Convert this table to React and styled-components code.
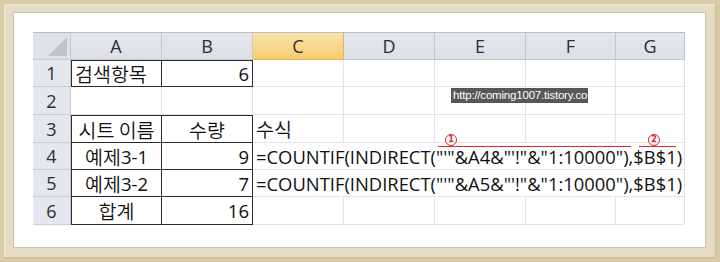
import React from "react";
import styled, { createGlobalStyle } from "styled-components";

const Global = createGlobalStyle`
  html, body { margin: 0; padding: 0; background: #fff; }
  body { font-family: "Noto Sans", "Noto Sans CJK KR", sans-serif; }
`;

const Frame = styled.div`
  width: 720px;
  height: 262px;
  box-sizing: border-box;
  background: #d6cba6;
  padding: 4px;
`;

const Bevel = styled.div`
  height: 100%;
  box-sizing: border-box;
  background: #e4dcc3;
  border-top: 1px solid #ece6d2;
  border-left: 1px solid #ece6d2;
  border-right: 1px solid #c9bd96;
  border-bottom: 1px solid #c9bd96;
  padding: 7px 9px 9px 8px;
`;

const Paper = styled.div`
  position: relative;
  height: 100%;
  box-sizing: border-box;
  background: #fff;
  border: 1px solid #cfc5a5;
  padding: 19px 0 0 19px;
`;

const Sheet = styled.div`
  display: grid;
  grid-template-columns: 38px 91px 91px 91px 91px 91px 90px 69px;
  grid-template-rows: 28px 27px 28px 28px 27px 27px 28px;
  width: 652px;
`;

const ColHead = styled.div`
  box-sizing: border-box;
  display: flex;
  align-items: center;
  justify-content: center;
  font-family: "Open Sans", "Noto Sans", sans-serif;
  font-size: 18px;
  color: #2d2d2d;
  background: ${(p) =>
    p.$active
      ? "linear-gradient(#fbe3a9, #f5cd73)"
      : "linear-gradient(#e4e7ec, #dcdfe5)"};
  border-top: 1px solid #b9bec6;
  border-right: 1px solid ${(p) => (p.$active ? "#e2b659" : "#c3c8cf")};
  border-bottom: 1px solid ${(p) => (p.$active ? "#e2b659" : "#c3c8cf")};
`;

const Corner = styled.div`
  position: relative;
  box-sizing: border-box;
  background: #dfe3e8;
  border-top: 1px solid #b9bec6;
  border-right: 1px solid #c3c8cf;
  border-bottom: 1px solid #c3c8cf;
  &::after {
    content: "";
    position: absolute;
    right: 3px;
    bottom: 3px;
    width: 0;
    height: 0;
    border-left: 19px solid transparent;
    border-bottom: 19px solid #bfc4cb;
  }
`;

const RowHead = styled.div`
  box-sizing: border-box;
  display: flex;
  align-items: center;
  justify-content: center;
  font-family: "Open Sans", "Noto Sans", sans-serif;
  font-size: 18px;
  color: #2d2d2d;
  background: #e4e7ec;
  border-right: 1px solid #c3c8cf;
  border-bottom: 1px solid #c9cdd3;
`;

const Cell = styled.div`
  position: relative;
  box-sizing: border-box;
  display: flex;
  align-items: center;
  justify-content: ${(p) =>
    p.$align === "right" ? "flex-end" : p.$align === "center" ? "center" : "flex-start"};
  padding: 0 3px;
  font-family: "Open Sans", "Noto Sans CJK KR", sans-serif;
  font-size: 18.5px;
  color: #111;
  white-space: nowrap;
  border-right: 1px solid ${(p) => (p.$boxed ? "#2b2b2b" : p.$noRight ? "transparent" : "#e1e3e6")};
  border-bottom: 1px solid ${(p) => (p.$boxed ? "#2b2b2b" : "#e1e3e6")};
  ${(p) => (p.$boxTop ? "border-top: 1px solid #2b2b2b;" : "")}
  ${(p) => (p.$boxLeft ? "border-left: 1px solid #2b2b2b;" : "")}
`;

const Hangul = styled.span`
  font-family: "Noto Sans CJK KR", sans-serif;
  font-size: 19.5px;
  font-weight: 350;
`;

const Formula = styled.span`
  position: relative;
  z-index: 2;
  font-family: "Open Sans", "Noto Sans", sans-serif;
  font-size: 18.4px;
  color: #111;
`;

const Watermark = styled.div`
  position: absolute;
  left: 437px;
  top: 75px;
  background: #575757;
  color: #fff;
  font-family: "Liberation Sans", sans-serif;
  font-size: 11.5px;
  line-height: 15px;
  padding: 0 1px 0 2px;
  white-space: nowrap;
  letter-spacing: -0.2px;
`;

const Mark = styled.div`
  position: absolute;
  height: 0;
  border-top: 1px solid #e8262c;
`;

const Circle = styled.div`
  position: absolute;
  width: 10px;
  height: 10px;
  border: 1px solid #d9262c;
  border-radius: 50%;
  color: #d9262c;
  font-family: "DejaVu Sans", sans-serif;
  font-size: 8px;
  font-weight: bold;
  line-height: 10px;
  text-align: center;
`;

const cols = ["A", "B", "C", "D", "E", "F", "G"];

export default function App() {
  const blank = (key, extra = {}) => <Cell key={key} {...extra} />;

  const renderRow = (n) => {
    const out = [<RowHead key={"h" + n}>{n}</RowHead>];
    if (n === 1) {
      out.push(<Cell key="a" $boxed $boxTop $boxLeft><Hangul>검색항목</Hangul></Cell>);
      out.push(<Cell key="b" $boxed $boxTop $align="right">6</Cell>);
      for (let i = 2; i < 7; i++) out.push(blank(i));
    } else if (n === 2) {
      for (let i = 0; i < 7; i++) out.push(blank(i));
    } else if (n === 3) {
      out.push(<Cell key="a" $boxed $boxTop $boxLeft $align="center"><Hangul>시트 이름</Hangul></Cell>);
      out.push(<Cell key="b" $boxed $boxTop $align="center"><Hangul>수량</Hangul></Cell>);
      out.push(<Cell key="c"><Hangul>수식</Hangul></Cell>);
      for (let i = 3; i < 7; i++) out.push(blank(i));
    } else if (n === 4 || n === 5) {
      out.push(<Cell key="a" $boxed $boxLeft $align="center"><Hangul>예제</Hangul>{n === 4 ? "3-1" : "3-2"}</Cell>);
      out.push(<Cell key="b" $boxed $align="right">{n === 4 ? "9" : "7"}</Cell>);
      out.push(
        <Cell key="c" $noRight>
          <Formula>{`=COUNTIF(INDIRECT("'"&A${n}&"'!"&"1:10000"),$B$1)`}</Formula>
        </Cell>
      );
      for (let i = 3; i < 7; i++) out.push(blank(i, i < 6 ? { $noRight: true } : {}));
    } else {
      out.push(<Cell key="a" $boxed $boxLeft $align="center"><Hangul>합계</Hangul></Cell>);
      out.push(<Cell key="b" $boxed $align="right">16</Cell>);
      for (let i = 2; i < 7; i++) out.push(blank(i));
    }
    return out;
  };

  return (
    <>
      <Global />
      <Frame>
        <Bevel>
          <Paper>
            <Sheet>
              <Corner />
              {cols.map((c) => (
                <ColHead key={c} $active={c === "C"}>{c}</ColHead>
              ))}
              {[1, 2, 3, 4, 5, 6].map((n) => renderRow(n))}
            </Sheet>
            <Watermark>http://coming1007.tistory.co</Watermark>
            <Circle style={{ left: 431, top: 121 }}>1</Circle>
            <Mark style={{ left: 424, top: 133, width: 193 }} />
            <Circle style={{ left: 634, top: 121 }}>2</Circle>
            <Mark style={{ left: 625, top: 133, width: 37 }} />
          </Paper>
        </Bevel>
      </Frame>
    </>
  );
}
